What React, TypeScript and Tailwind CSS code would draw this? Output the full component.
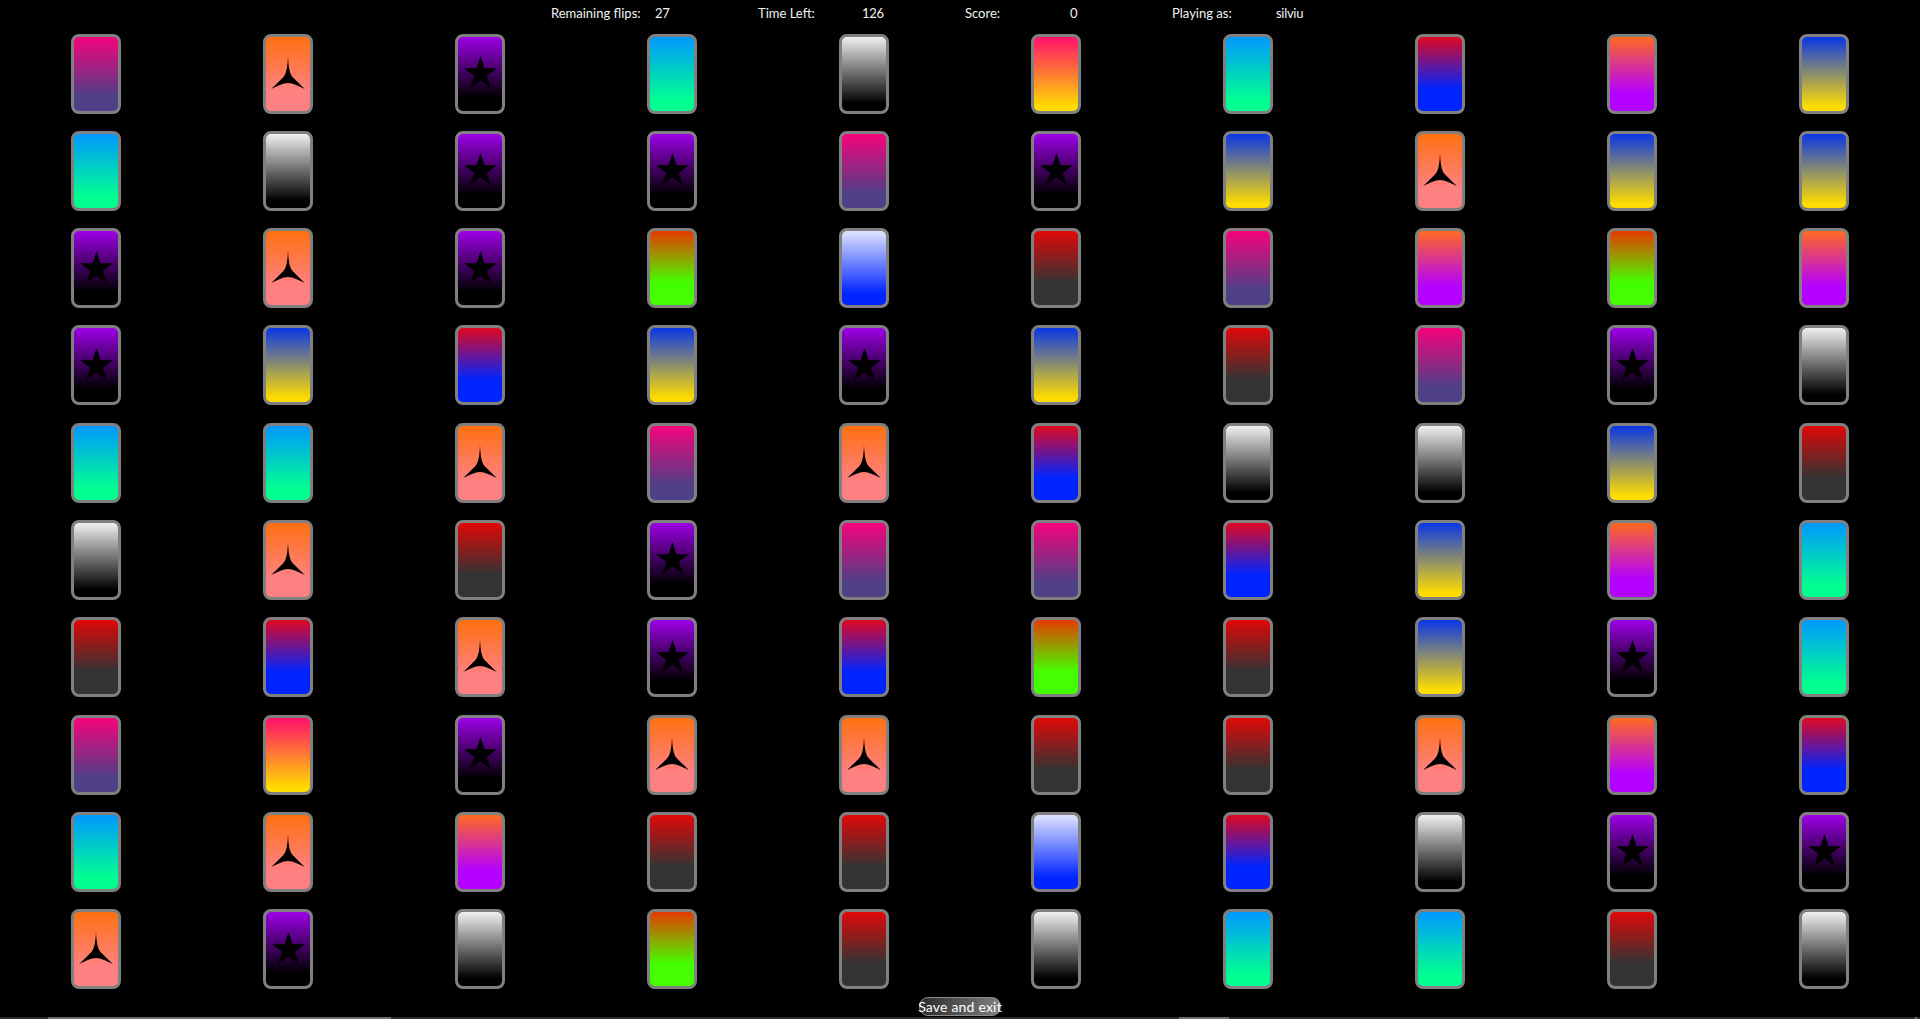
const CARD_BG: Record<string, string> = {
  A: 'from-[#f5037c] to-[#4f3f86] to-80%',
  B: 'from-[#ff7010] to-[#ff8080] to-72%',
  C: 'from-[#9c00e6] to-[#000000] to-82%',
  D: 'from-[#0098ff] to-[#00ff90] to-85%',
  E: 'from-[#f0f0f0] to-[#000000] to-90%',
  F: 'from-[#ff0f6b] to-[#ffdd00] to-95%',
  G: 'from-[#ff6a20] to-[#b400ff] to-75%',
  H: 'from-[#e00820] to-[#0024ff] to-70%',
  I: 'from-[#0a36e6] to-[#ffdd00] to-95%',
  J: 'from-[#e00808] to-[#333333] to-70%',
  K: 'from-[#e63a00] to-[#44ff00] to-70%',
  L: 'from-[#e0e4ff] to-[#0024ff] to-85%',
}

const ROWS = [
  'ABCDEFDHGI',
  'DECCACIBII',
  'CBCKLJAGKG',
  'CIHICIJACE',
  'DDBABHEEIJ',
  'EBJCAAHIGD',
  'JHBCHKJICD',
  'AFCBBJJBGH',
  'DBGJJLHECC',
  'BCEKJEDDJE',
]

const Star = () => (
  <svg width="33" height="32" viewBox="0 0 33 32" className="block mb-[3px]">
    <polygon fill="#000" points="16.5,0 20.4,12.2 33,12.2 22.8,19.8 26.7,32 16.5,24.5 6.3,32 10.2,19.8 0,12.2 12.6,12.2" />
  </svg>
)

const Tri = () => (
  <svg width="34" height="33" viewBox="0 0 34 33" className="block mb-[3px]">
    <path fill="#000" d="M17 0 C17.5 11 18.5 18 22 21.5 C25 24.5 30 29.5 34 33 C28 30.5 22 27 17 27 C12 27 6 30.5 0 33 C4 29.5 9 24.5 12 21.5 C15.5 18 16.5 11 17 0 Z" />
  </svg>
)

const Card = ({ kind }: { kind: string }) => (
  <div className={`w-[50px] h-[80px] border-[3px] border-[#808080] rounded-[8px] bg-linear-to-b/srgb flex items-center justify-center ${CARD_BG[kind]}`}>
    {kind === 'B' && <Tri />}
    {kind === 'C' && <Star />}
  </div>
)

const Stat = ({ label, value, labelW, valueW }: { label: string; value: string; labelW: string; valueW: string }) => (
  <>
    <span className={labelW}>{label}</span>
    <span className={`tracking-[-0.3px] ${valueW}`}>{value}</span>
  </>
)

export default function App() {
  return (
    <div className="h-screen overflow-hidden bg-black text-white flex flex-col font-['Lato',sans-serif]">
      {/* Status line */}
      <div className="h-[33.5px] pl-[551px] pt-[5px] flex text-[13px] leading-[17px] text-[#f2f2f2] shrink-0">
        <Stat label="Remaining flips:" value="27" labelW="w-[104px]" valueW="w-[103px]" />
        <Stat label="Time Left:" value="126" labelW="w-[104px]" valueW="w-[103px]" />
        <Stat label="Score:" value="0" labelW="w-[105px]" valueW="w-[102px]" />
        <Stat label="Playing as:" value="silviu" labelW="w-[104px]" valueW="w-[60px]" />
      </div>

      {/* Board */}
      <div className="grid grid-cols-10 gap-y-[17.3px] justify-items-center shrink-0">
        {ROWS.flatMap((row, r) =>
          row.split('').map((kind, c) => <Card key={`${r}-${c}`} kind={kind} />),
        )}
      </div>

      <div className="flex justify-center mt-[8px] shrink-0">
        <button className="w-[82px] h-[19px] rounded-[9px] border border-[#8a8a8a] bg-linear-to-r/srgb from-[#2a2a2a] to-[#808080] text-[14px] leading-[16px] text-white tracking-[0.2px] whitespace-nowrap flex items-center justify-center">
          Save and exit
        </button>
      </div>

      {/* Scrollbars, just visible at the bottom edge */}
      <div className="mt-auto h-[2px] bg-[#2b2b2b] flex shrink-0">
        <div className="ml-[48px] w-[343px] bg-[#6e6e6e]" />
        <div className="ml-[788px] w-[50px] bg-[#6e6e6e]" />
        <div className="ml-auto mr-[3px] w-[2px] bg-[#6e6e6e]" />
      </div>
    </div>
  )
}
